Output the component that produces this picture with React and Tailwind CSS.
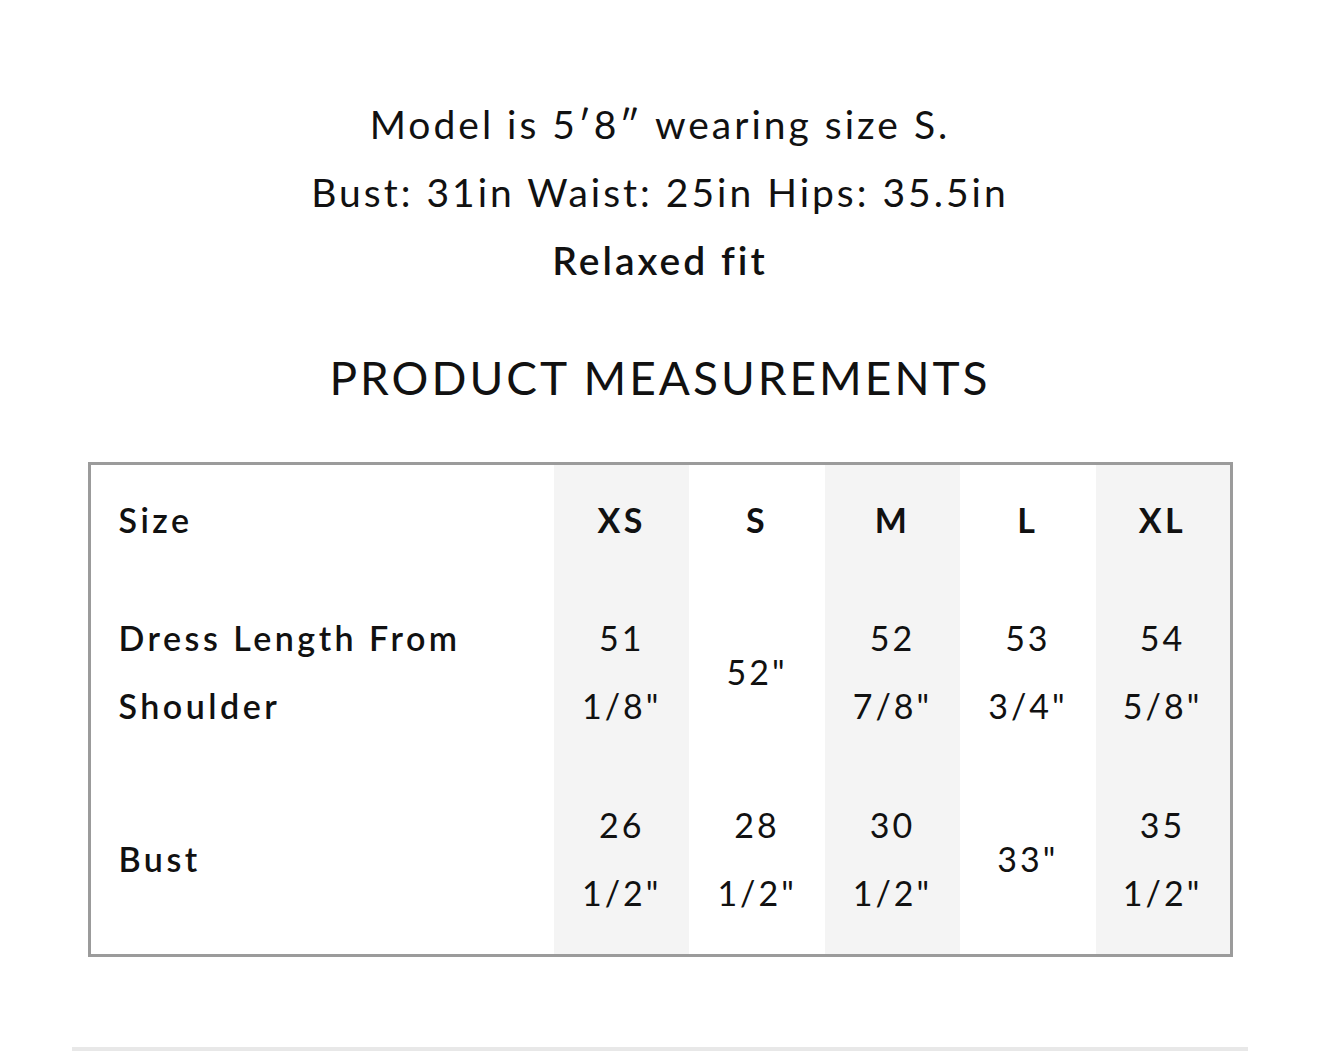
import React from "react";

const sizes = ["XS", "S", "M", "L", "XL"];

const rows = [
  {
    label: ["Dress Length From", "Shoulder"],
    values: [["51", '1/8"'], ['52"'], ["52", '7/8"'], ["53", '3/4"'], ["54", '5/8"']],
    pad: "py-[25px]",
  },
  {
    label: ["Bust"],
    values: [["26", '1/2"'], ["28", '1/2"'], ["30", '1/2"'], ['33"'], ["35", '1/2"']],
    pad: "pt-[26px] pb-[27px]",
  },
];

function App() {
  return (
    <div
      className="w-[1320px] min-h-[1056px] bg-white text-[#111] flex flex-col items-center"
      style={{ fontFamily: "Lato, 'Open Sans', sans-serif" }}
    >
      <div className="pt-[90px] flex flex-col items-center text-[39px] leading-[68px] tracking-[3px]">
        <p>Model is 5′8″ wearing size S.</p>
        <p>Bust: 31in Waist: 25in Hips: 35.5in</p>
        <p className="font-semibold">Relaxed fit</p>
      </div>

      <h2 className="mt-[56px] text-[46px] leading-[56px] tracking-[3px]">PRODUCT MEASUREMENTS</h2>

      <table className="mt-[56px] w-[1145px] table-fixed border-collapse border-[3px] border-[#9b9b9b] text-[34px] leading-[68px] tracking-[3.5px]">
        <colgroup>
          <col className="w-[465px]" />
          {sizes.map((s) => (
            <col key={s} />
          ))}
        </colgroup>
        <thead>
          <tr>
            <th className="text-left font-semibold pl-[28px] pt-[21px] pb-[25px]">Size</th>
            {sizes.map((s, i) => (
              <th
                key={s}
                className={`font-bold text-center pt-[21px] pb-[25px] ${i % 2 === 0 ? "bg-[#f4f4f4]" : ""}`}
              >
                {s}
              </th>
            ))}
          </tr>
        </thead>
        <tbody>
          {rows.map((row) => (
            <tr key={row.label[0]}>
              <td className={`align-middle text-left font-semibold pl-[28px] ${row.pad}`}>
                {row.label.map((l) => (
                  <span key={l} className="block">
                    {l}
                  </span>
                ))}
              </td>
              {row.values.map((v, i) => (
                <td
                  key={i}
                  className={`align-middle text-center tracking-[3px] ${row.pad} ${i % 2 === 0 ? "bg-[#f4f4f4]" : ""}`}
                >
                  {v.map((line) => (
                    <span key={line} className="block">
                      {line}
                    </span>
                  ))}
                </td>
              ))}
            </tr>
          ))}
        </tbody>
      </table>

      <div className="mt-[90px] w-[1176px] h-[4px] bg-[#e8e8e8]" />
    </div>
  );
}

export default App;
